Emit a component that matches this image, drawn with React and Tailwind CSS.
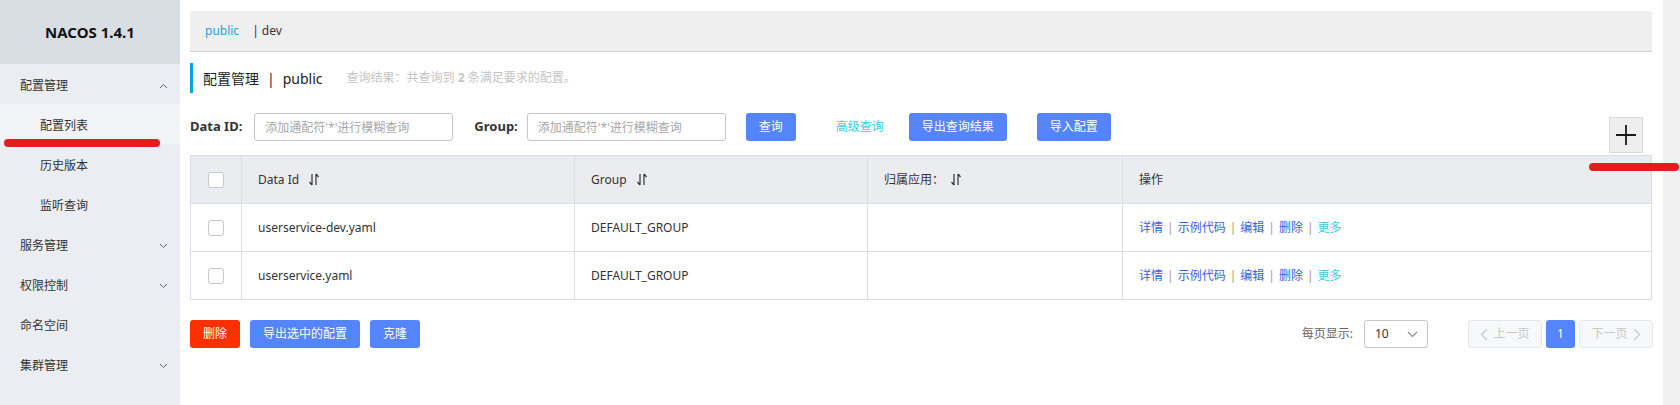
import React from 'react';

const SortIcon = () => (
  <svg width="12" height="13" viewBox="0 0 12 13" fill="none" stroke="#333" strokeWidth="1.2">
    <path d="M4 1v11M4 12L1.5 9" />
    <path d="M8 12V1M8 1l2.5 3" />
  </svg>
);

const Chevron = ({ up }) => (
  <svg width="9" height="6" viewBox="0 0 9 6" fill="none" stroke="#666" strokeWidth="1">
    {up ? <path d="M1 5l3.5-3.5L8 5" /> : <path d="M1 1l3.5 3.5L8 1" />}
  </svg>
);

const MenuItem = ({ label, up, arrow = true }) => (
  <div className="flex h-[40px] items-center justify-between pl-[20px] pr-[12px] pt-[4px]">
    <span>{label}</span>
    {arrow && <Chevron up={up} />}
  </div>
);

const SubItem = ({ label, active }) => (
  <div className={`flex h-[40px] items-center pl-[40px] pt-[4px] ${active ? 'bg-[#f2f3f7]' : ''}`}>{label}</div>
);

const Checkbox = () => (
  <span className="mx-auto block h-[16px] w-[16px] rounded-[3px] border border-[#c4c6cf] bg-white" />
);

const Btn = ({ children, className = '' }) => (
  <button className={`flex h-[28px] items-center justify-center rounded-[3px] text-[12px] text-white ${className}`}>
    {children}
  </button>
);

const rows = [
  { id: 'userservice-dev.yaml', group: 'DEFAULT_GROUP' },
  { id: 'userservice.yaml', group: 'DEFAULT_GROUP' },
];

const Ops = () => (
  <div className="flex items-center text-[12px]">
    <span className="text-[#3a5ee6]">详情</span>
    <span className="mx-[4px] text-[#a89a8a]">|</span>
    <span className="text-[#3a5ee6]">示例代码</span>
    <span className="mx-[4px] text-[#a89a8a]">|</span>
    <span className="text-[#3a5ee6]">编辑</span>
    <span className="mx-[4px] text-[#a89a8a]">|</span>
    <span className="text-[#3a5ee6]">删除</span>
    <span className="mx-[4px] text-[#a89a8a]">|</span>
    <span className="text-[#33cde5]">更多</span>
  </div>
);

export default function App() {
  return (
    <div className="relative flex h-[405px] w-[1680px] overflow-hidden bg-white font-['Noto_Sans','Noto_Sans_CJK_SC',sans-serif] text-[12px] text-[#333]">
      {/* sidebar */}
      <aside className="relative w-[180px] shrink-0 bg-[#eaedf1]">
        <div className="flex h-[64px] items-center justify-center bg-[#d9dee4] text-[15px] font-bold text-[#111]">
          NACOS 1.4.1
        </div>
        <MenuItem label="配置管理" up />
        <SubItem label="配置列表" active />
        <SubItem label="历史版本" />
        <SubItem label="监听查询" />
        <MenuItem label="服务管理" />
        <MenuItem label="权限控制" />
        <MenuItem label="命名空间" arrow={false} />
        <MenuItem label="集群管理" />
        <span className="absolute left-[4px] top-[139px] h-[8px] w-[156px] rounded-full bg-[#e41e1e]" />
      </aside>

      {/* main */}
      <main className="flex min-w-0 flex-1 flex-col pl-[10px] pr-[11px] pt-[11px]">
        <div className="flex h-[41px] items-center border-b border-[#cfcfcf] bg-[#efefef] pl-[15px]">
          <span className="text-[#1ea5d8]">public</span>
          <span className="ml-[13px]">| dev</span>
        </div>

        <div className="mt-[11px] flex h-[30px] items-center border-l-[3px] border-[#0aa5d8] pl-[10px]">
          <span className="text-[14px] text-[#222]">配置管理</span>
          <span className="mx-[8px] text-[14px] text-[#222]">|</span>
          <span className="text-[14px] text-[#222]">public</span>
          <span className="ml-[24px] text-[#c4c4c4]">
            查询结果：共查询到 <b className="font-bold">2</b> 条满足要求的配置。
          </span>
        </div>

        <div className="mt-[20px] flex items-start">
          <label className="flex h-[28px] items-center text-[13px] font-bold text-[#333]">Data ID:</label>
          <input
            className="ml-[12px] h-[28px] w-[199px] rounded-[3px] border border-[#c4c6cf] px-[10px] text-[12px] outline-none placeholder:text-[#a8a8a8]"
            placeholder="添加通配符'*'进行模糊查询"
          />
          <label className="ml-[21px] flex h-[28px] items-center text-[13px] font-bold text-[#333]">Group:</label>
          <input
            className="ml-[9px] h-[28px] w-[199px] rounded-[3px] border border-[#c4c6cf] px-[10px] text-[12px] outline-none placeholder:text-[#a8a8a8]"
            placeholder="添加通配符'*'进行模糊查询"
          />
          <Btn className="ml-[20px] w-[50px] bg-[#5584ff]">查询</Btn>
          <span className="ml-[40px] flex h-[28px] items-center text-[#33cde5]">高级查询</span>
          <Btn className="ml-[25px] w-[98px] bg-[#5584ff]">导出查询结果</Btn>
          <Btn className="ml-[30px] w-[74px] bg-[#5584ff]">导入配置</Btn>
          <button className="ml-auto mr-[9px] mt-[4px] flex h-[36px] w-[34px] items-center justify-center border border-[#dcdcdc] bg-[#eeeeee]">
            <svg width="20" height="20" viewBox="0 0 20 20" stroke="#1a1a1a" strokeWidth="1.8">
              <path d="M0 10h20M10 0v20" />
            </svg>
          </button>
        </div>

        <table className="mt-[2px] w-full table-fixed border-collapse text-[12px]">
          <colgroup>
            <col className="w-[51px]" />
            <col className="w-[333px]" />
            <col className="w-[293px]" />
            <col className="w-[255px]" />
            <col />
          </colgroup>
          <thead>
            <tr className="h-[48px] bg-[#ebecf0]">
              <th className="border border-[#dcdee3]"><Checkbox /></th>
              <th className="border border-[#dcdee3] pl-[16px] text-left font-normal">
                <span className="flex items-center gap-[9px]">Data Id <SortIcon /></span>
              </th>
              <th className="border border-[#dcdee3] pl-[16px] text-left font-normal">
                <span className="flex items-center gap-[9px]">Group <SortIcon /></span>
              </th>
              <th className="border border-[#dcdee3] pl-[16px] text-left font-normal">
                <span className="flex items-center gap-[6px]">归属应用： <SortIcon /></span>
              </th>
              <th className="border border-[#dcdee3] pl-[16px] text-left font-normal">操作</th>
            </tr>
          </thead>
          <tbody>
            {rows.map((r) => (
              <tr key={r.id} className="h-[48px]">
                <td className="border border-[#dcdee3]"><Checkbox /></td>
                <td className="border border-[#dcdee3] pl-[16px]">{r.id}</td>
                <td className="border border-[#dcdee3] pl-[16px]">{r.group}</td>
                <td className="border border-[#dcdee3] pl-[16px]"></td>
                <td className="border border-[#dcdee3] pl-[16px]"><Ops /></td>
              </tr>
            ))}
          </tbody>
        </table>

        <div className="mt-[20px] flex items-center">
          <Btn className="w-[50px] bg-[#ff3000]">删除</Btn>
          <Btn className="ml-[10px] w-[110px] bg-[#5584ff]">导出选中的配置</Btn>
          <Btn className="ml-[10px] w-[50px] bg-[#5584ff]">克隆</Btn>
          <div className="ml-auto flex items-center">
            <span className="text-[#666]">每页显示:</span>
            <div className="ml-[11px] flex h-[28px] w-[64px] items-center justify-between rounded-[3px] border border-[#c4c6cf] pl-[10px] pr-[9px]">
              <span className="text-[#333]">10</span>
              <svg width="11" height="7" viewBox="0 0 11 7" fill="none" stroke="#888" strokeWidth="1.1">
                <path d="M1 1l4.5 4.5L10 1" />
              </svg>
            </div>
            <div className="ml-[40px] flex h-[28px] w-[74px] items-center justify-center gap-[5px] rounded-[3px] border border-[#e6e7eb] bg-[#f7f8fa] text-[#c8c8c8]">
              <svg width="8" height="13" viewBox="0 0 8 13" fill="none" stroke="#c8c8c8" strokeWidth="1.2">
                <path d="M7 1L1.5 6.5 7 12" />
              </svg>
              上一页
            </div>
            <div className="ml-[4px] flex h-[28px] w-[29px] items-center justify-center rounded-[3px] bg-[#5584ff] text-white">1</div>
            <div className="ml-[4px] mr-[-1px] flex h-[28px] w-[74px] items-center justify-center gap-[5px] rounded-[3px] border border-[#e6e7eb] bg-[#f7f8fa] text-[#c8c8c8]">
              下一页
              <svg width="8" height="13" viewBox="0 0 8 13" fill="none" stroke="#c8c8c8" strokeWidth="1.2">
                <path d="M1 1l5.5 5.5L1 12" />
              </svg>
            </div>
          </div>
        </div>
      </main>

      {/* scrollbar track */}
      <div className="w-[17px] shrink-0 bg-[#f1f1f1]" />

      <span className="absolute left-[1589px] top-[163px] h-[8px] w-[90px] rounded-full bg-[#e41e1e]" />
    </div>
  );
}
